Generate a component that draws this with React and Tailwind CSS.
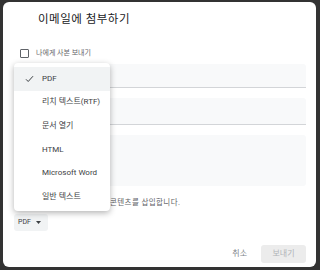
const FONT = { fontFamily: "Roboto, 'Noto Sans CJK KR', sans-serif" };

const FORMATS = ["PDF", "리치 텍스트(RTF)", "문서 열기", "HTML", "Microsoft Word", "일반 텍스트"];

function Checkbox() {
  return <div className="w-[9px] h-[9px] border-[1.5px] border-[#5f6368] rounded-[1px] shrink-0" />;
}

function FormatMenu() {
  return (
    <ul className="absolute left-[11px] top-[61px] w-[96px] bg-white rounded-[4px] shadow-[0_2px_6px_rgba(0,0,0,0.3)] pt-[4px] pb-[2px] z-10">
      {FORMATS.map((f, i) => (
        <li
          key={f}
          className={`h-[23.6px] flex items-center text-[8px] text-[#3c4043] ${i === 0 ? "bg-[#f1f3f4]" : ""}`}
        >
          <span className="w-[28px] flex justify-center pl-[3px]">
            {i === 0 && (
              <svg width="9" height="8" viewBox="0 0 9 8" fill="none">
                <path d="M1 4.3 L3.2 6.5 L8 1.2" stroke="#3c4043" strokeWidth="1" />
              </svg>
            )}
          </span>
          <span>{f}</span>
        </li>
      ))}
    </ul>
  );
}

export default function App() {
  return (
    <div className="w-[320px] h-[270px] bg-[#333333] pt-[2px] pl-[3px]" style={FONT}>
      <div className="relative w-[313px] h-[265px] bg-white rounded-[6px] pl-[11px] pr-[10px] flex flex-col">
        {/* Title */}
        <h1 className="mt-[9px] ml-[24px] h-[16px] leading-[16px] text-[11.5px] text-[#202124] tracking-[0.5px]">
          이메일에 첨부하기
        </h1>

        {/* Copy to me */}
        <label className="mt-[20px] ml-[6px] flex items-center gap-[7px] h-[12px]">
          <Checkbox />
          <span className="text-[7px] text-[#5f6368]">나에게 사본 보내기</span>
        </label>

        {/* Fields */}
        <div className="mt-[5px] h-[24px] bg-[#f8f9fa] border-b border-[#d3d5d8] rounded-t-[3px]" />
        <div className="mt-[10px] h-[27px] bg-[#f8f9fa] border-b border-[#d3d5d8] rounded-t-[3px]" />
        <div className="mt-[10px] h-[51px] bg-[#f8f9fa] rounded-[3px]" />

        {/* Inline content note (its start is covered by the menu) */}
        <div className="mt-[11px] h-[12px] flex items-center pl-[96px]">
          <span className="text-[7.5px] text-[#5f6368] tracking-[0.4px]">콘텐츠를 삽입합니다.</span>
        </div>

        {/* Format select */}
        <div className="mt-[5px] w-[34px] h-[17px] bg-[#f1f3f4] rounded-[3px] flex items-center pl-[4px] gap-[5px] text-[7px] text-[#3c4043]">
          <span>PDF</span>
          <svg width="5" height="3" viewBox="0 0 5 3">
            <path d="M0 0 L5 0 L2.5 3 Z" fill="#3c4043" />
          </svg>
        </div>

        {/* Footer */}
        <div className="mt-[14px] flex items-center justify-end gap-[14px] text-[8px]">
          <span className="text-[#80868b]">취소</span>
          <button className="w-[45px] h-[18px] bg-[#ececec] rounded-[3px] text-[#b0b3b7]">보내기</button>
        </div>

        <FormatMenu />
      </div>
    </div>
  );
}
